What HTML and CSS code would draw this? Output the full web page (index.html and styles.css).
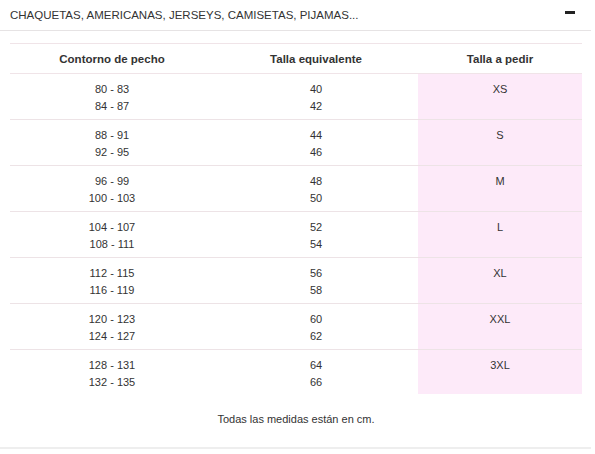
FILE: index.html
```html
<!DOCTYPE html>
<html lang="es">
<head>
  <meta charset="UTF-8" />
  <title>Guía de tallas</title>
  <link rel="stylesheet" href="styles.css">
</head>
<body>
  <div class="accordion">
    <div class="accordion-head">
      <span class="accordion-title">CHAQUETAS, AMERICANAS, JERSEYS, CAMISETAS, PIJAMAS...</span>
      <span class="accordion-toggle"></span>
    </div>
    <div class="accordion-body">
      <table class="sizes">
        <thead>
          <tr>
            <th>Contorno de pecho</th>
            <th>Talla equivalente</th>
            <th class="pick">Talla a pedir</th>
          </tr>
        </thead>
        <tbody>
          <tr><td>80 - 83<br>84 - 87</td><td>40<br>42</td><td class="pick">XS</td></tr>
          <tr><td>88 - 91<br>92 - 95</td><td>44<br>46</td><td class="pick">S</td></tr>
          <tr><td>96 - 99<br>100 - 103</td><td>48<br>50</td><td class="pick">M</td></tr>
          <tr><td>104 - 107<br>108 - 111</td><td>52<br>54</td><td class="pick">L</td></tr>
          <tr><td>112 - 115<br>116 - 119</td><td>56<br>58</td><td class="pick">XL</td></tr>
          <tr><td>120 - 123<br>124 - 127</td><td>60<br>62</td><td class="pick">XXL</td></tr>
          <tr><td>128 - 131<br>132 - 135</td><td>64<br>66</td><td class="pick">3XL</td></tr>
        </tbody>
      </table>
      <p class="note">Todas las medidas están en cm.</p>
    </div>
  </div>
</body>
</html>
```

FILE: styles.css
```css
* {
  box-sizing: border-box;
  margin: 0;
  padding: 0;
}

body {
  background: #ffffff;
  font-family: "Liberation Sans", Arial, sans-serif;
  color: #333333;
}

.accordion {
  width: 591px;
  border-bottom: 2px solid #eeeeee;
}

.accordion-head {
  display: flex;
  align-items: center;
  justify-content: space-between;
  height: 31px;
  padding: 0 16px 0 10px;
  border-bottom: 1px solid #e6e3e4;
}

.accordion-title {
  font-size: 11.5px;
  color: #333333;
}

.accordion-toggle {
  width: 10px;
  height: 3px;
  background: #222222;
  margin-top: -6px;
}

.accordion-body {
  padding: 12px 9px 0 10px;
}

.sizes {
  width: 572px;
  border-collapse: collapse;
  font-size: 11px;
  text-align: center;
}

.sizes th {
  height: 30px;
  font-size: 11.5px;
  font-weight: bold;
  border-top: 1px solid #f0e4e8;
  border-bottom: 1px solid #f0e4e8;
  width: 204px;
}

.sizes th.pick {
  width: 164px;
}

.sizes td {
  height: 46px;
  line-height: 17px;
  padding: 7px 0 0;
  vertical-align: top;
  border-bottom: 1px solid #ede3e6;
}

.sizes tr:last-child td {
  border-bottom: none;
  height: 44px;
}

.sizes td.pick {
  background: #fdeaf9;
}

.note {
  font-size: 11px;
  text-align: center;
  padding: 19px 0 22px;
}
```
